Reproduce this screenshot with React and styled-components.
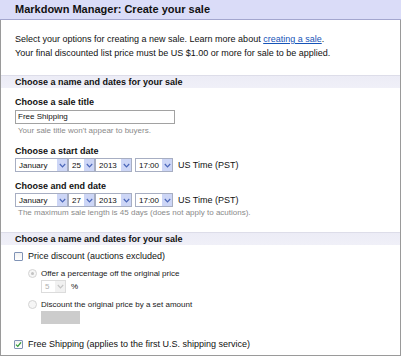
import React from "react";
import styled, { createGlobalStyle } from "styled-components";

const GlobalStyle = createGlobalStyle`
  html, body {
    margin: 0;
    padding: 0;
    background: #ffffff;
  }
  body {
    font-family: "Liberation Sans", Arial, sans-serif;
    color: #000;
  }
`;

const Page = styled.div`
  width: 401px;
  box-sizing: border-box;
`;

const TitleBar = styled.div`
  height: 19px;
  line-height: 19px;
  padding-left: 15px;
  background: #dadcf8;
  border-bottom: 1px solid #a3a6cf;
  font-size: 11px;
  font-weight: 700;
  color: #111;
`;

const Panel = styled.div`
  border: 1px solid #9a9a9a;
  border-top: none;
  padding-bottom: 5px;
`;

const Intro = styled.p`
  margin: 0;
  padding: 12px 14px 0;
  font-size: 9px;
  line-height: 14px;
  color: #111;
`;

const TextLink = styled.a`
  color: #1654b8;
  text-decoration: underline;
`;

const SectionHead = styled.div`
  margin-top: ${({ $gap }) => $gap}px;
  height: 12px;
  line-height: 12px;
  padding-left: 14px;
  border-top: 1px solid #dddde9;
  background: linear-gradient(#ececf6, #f0f0f8);
  font-size: 9px;
  font-weight: 700;
  color: #111;
`;

const Body = styled.div`
  padding: 0 14px;
`;

const Label = styled.div`
  margin-top: ${({ $gap }) => $gap}px;
  line-height: 12px;
  font-size: 9px;
  font-weight: 700;
  color: #111;
`;

const TextInput = styled.div`
  margin-top: 2px;
  width: 160px;
  height: 14px;
  box-sizing: border-box;
  border: 1px solid #a2a2a2;
  padding-left: 2px;
  font-size: 8px;
  line-height: 12px;
  color: #111;
`;

const Hint = styled.div`
  margin-top: ${({ $gap }) => $gap || 0}px;
  padding-left: 3px;
  line-height: 12px;
  font-size: 8px;
  color: #8a8a8a;
`;

const DateRow = styled.div`
  margin-top: 1px;
  display: flex;
  align-items: center;
  height: 14px;
`;

const SelectBox = styled.div`
  width: ${({ $w }) => $w}px;
  margin-left: ${({ $ml }) => $ml || 0}px;
  height: ${({ $h }) => $h || 14}px;
  box-sizing: border-box;
  display: flex;
  align-items: stretch;
  border: 1px solid ${({ $off }) => ($off ? "#dcdcdc" : "#a7aec2")};
  background: #fff;
  font-size: 8px;
  color: ${({ $off }) => ($off ? "#b0b0b0" : "#111")};
`;

const SelectText = styled.span`
  flex: 1;
  padding-left: 3px;
  display: flex;
  align-items: center;
`;

const SelectArrow = styled.span`
  width: 10px;
  display: flex;
  align-items: center;
  justify-content: center;
  background: ${({ $off }) => ($off ? "#f1f1f1" : "#cdd6f6")};
  color: ${({ $off }) => ($off ? "#c4c4c4" : "#4a66b8")};
`;

const Zone = styled.span`
  margin-left: 5px;
  font-size: 9px;
  color: #111;
`;

const CheckRow = styled.label`
  margin-top: ${({ $gap }) => $gap}px;
  display: flex;
  align-items: center;
  height: 12px;
  font-size: 9px;
  color: #111;
`;

const CheckBox = styled.span`
  width: 9px;
  height: 9px;
  box-sizing: border-box;
  margin-left: -1px;
  margin-right: 5px;
  border: 1px solid #8093b6;
  border-radius: 1px;
  background: linear-gradient(#f2f2f2, #ffffff);
  display: flex;
  align-items: center;
  justify-content: center;
`;

const RadioRow = styled.div`
  margin-top: ${({ $gap }) => $gap}px;
  padding-left: 13px;
  display: flex;
  align-items: center;
  height: 12px;
  font-size: 8px;
  color: #1a1a1a;
`;

const Radio = styled.span`
  width: 9px;
  height: 9px;
  box-sizing: border-box;
  margin-right: 4px;
  border: 1px solid #d4d4d4;
  border-radius: 50%;
  background: #f6f6f6;
  display: flex;
  align-items: center;
  justify-content: center;

  &::after {
    content: "";
    display: ${({ $on }) => ($on ? "block" : "none")};
    width: 3px;
    height: 3px;
    border-radius: 50%;
    background: #c2c2c2;
  }
`;

const Indented = styled.div`
  margin-top: 1px;
  padding-left: 26px;
  display: flex;
  align-items: center;
  height: 13px;
`;

const Percent = styled.span`
  margin-left: 5px;
  font-size: 8px;
  color: #111;
`;

const AmountBox = styled.div`
  width: 39px;
  height: 13px;
  background: #cccccc;
`;

const Chevron = () => (
  <svg width="7" height="5" viewBox="0 0 7 5">
    <path d="M0.8 1 L3.5 3.8 L6.2 1" fill="none" stroke="currentColor" strokeWidth="1.2" />
  </svg>
);

const Tick = () => (
  <svg width="7" height="7" viewBox="0 0 7 7">
    <path d="M1 3.6 L2.8 5.4 L6 1.4" fill="none" stroke="#2f9a37" strokeWidth="1.3" />
  </svg>
);

const Select = ({ value, w, ml, h, off }) => (
  <SelectBox $w={w} $ml={ml} $h={h} $off={off}>
    <SelectText>{value}</SelectText>
    <SelectArrow $off={off}>
      <Chevron />
    </SelectArrow>
  </SelectBox>
);

const DatePicker = ({ day }) => (
  <DateRow>
    <Select value="January" w={53} />
    <Select value={day} w={27} />
    <Select value="2013" w={37} />
    <Select value="17:00" w={38} ml={3} />
    <Zone>US Time (PST)</Zone>
  </DateRow>
);

export default function App() {
  return (
    <Page>
      <GlobalStyle />
      <TitleBar>Markdown Manager: Create your sale</TitleBar>
      <Panel>
        <Intro>
          Select your options for creating a new sale. Learn more about{" "}
          <TextLink href="#">creating a sale</TextLink>.
          <br />
          Your final discounted list price must be US $1.00 or more for sale to be applied.
        </Intro>

        <SectionHead $gap={15}>Choose a name and dates for your sale</SectionHead>
        <Body>
          <Label $gap={8}>Choose a sale title</Label>
          <TextInput>Free Shipping</TextInput>
          <Hint $gap={1}>Your sale title won't appear to buyers.</Hint>

          <Label $gap={8}>Choose a start date</Label>
          <DatePicker day="25" />

          <Label $gap={8}>Choose and end date</Label>
          <DatePicker day="27" />
          <Hint>The maximum sale length is 45 days (does not apply to acutions).</Hint>
        </Body>

        <SectionHead $gap={13}>Choose a name and dates for your sale</SectionHead>
        <Body>
          <CheckRow $gap={5}>
            <CheckBox />
            Price discount (auctions excluded)
          </CheckRow>
          <RadioRow $gap={5}>
            <Radio $on />
            Offer a percentage off the original price
          </RadioRow>
          <Indented>
            <Select value="5" w={25} h={13} off />
            <Percent>%</Percent>
          </Indented>
          <RadioRow $gap={5}>
            <Radio />
            Discount the original price by a set amount
          </RadioRow>
          <Indented>
            <AmountBox />
          </Indented>
          <CheckRow $gap={14}>
            <CheckBox>
              <Tick />
            </CheckBox>
            Free Shipping (applies to the first U.S. shipping service)
          </CheckRow>
        </Body>
      </Panel>
    </Page>
  );
}
